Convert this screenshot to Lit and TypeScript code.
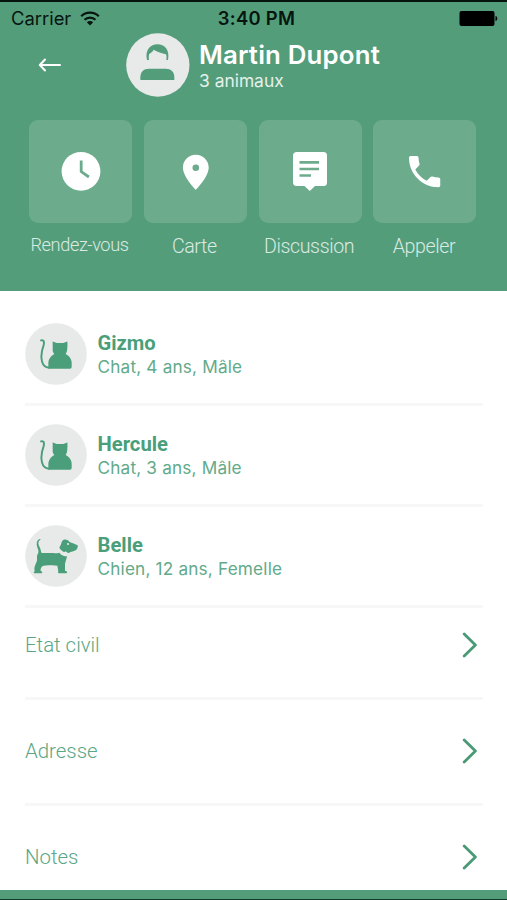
import { LitElement, html, css, svg } from "lit";
import { customElement } from "lit/decorators.js";

const catIcon = svg`
  <path d="M79 91C86 90 88 93 88 98C88 106 84 113 82 123C78 142 79 171 103 173" fill="none" stroke="#4a9f7a" stroke-width="5.8" stroke-linecap="round"/>
  <path d="M114 94C119 97 123 98 127 99H145C149 98 154 97 158 94C159 105 158 118 157 123C156 127 154 130 153 132C163 137 171 147 171 158V171Q171 176 166 176H104Q101 176 101 173V161C101 148 108 138 119 132C116 129 114 125 114 121Z" fill="#4a9f7a"/>`;

const dogIcon = svg`
  <path d="M75 388C66 392 65 401 67 409C68 417 73 421 71 429C69 433 67 436 67 442V452C66 460 59 468 59 477L60 485C57 487 56 491 59 491H80C84 491 84 487 80 485L78 484C77 478 79 473 84 469C95 466 107 467 128 468L131 485C129 488 130 491 133 491H154C158 491 159 487 155 485L151 483V462C153 455 156 447 157 440C148 440 140 437 134 429C124 432 116 430 108 430H83C78 430 80 424 77 417C73 407 69 402 72 396C73 392 80 390 77 388Z" fill="#4a9f7a"/>
  <path d="M146 391C152 388 160 391 164 396C171 401 183 402 189 407C190 413 187 422 180 423C174 426 168 425 164 429C160 432 157 428 153 425C150 428 146 427 142 423C138 421 135 417 134 413C137 410 138 406 140 401C141 396 143 392 146 391Z" fill="#4a9f7a"/>
  <circle cx="160" cy="403" r="3" fill="#e8eaea"/>`;

const clockIcon = svg`<circle cx="81" cy="171.3" r="19.4" fill="#fff"/>
  <path d="M81.2 160.6V171.6L88.9 177" fill="none" stroke="#6cac8d" stroke-width="2.8"/>`;
const pinIcon = svg`<path fill-rule="evenodd" fill="#fff" d="M80.8 154.7C73.5 154.7 67.9 160.4 67.9 167.6C67.9 177.2 80.8 189.9 80.8 189.9S93.7 177.2 93.7 167.6C93.7 160.4 88 154.7 80.8 154.7ZM80.8 164.4A3.3 3.3 0 1 1 80.8 171A3.3 3.3 0 1 1 80.8 164.4Z"/>`;
const chatIcon = svg`<path d="M67 152H93.5Q97 152 97 155.5V182.5Q97 186 93.5 186H85L79.8 191L74.5 186H67Q63 186 63 182.5V155.5Q63 152 67 152Z" fill="#fff"/>
  <path d="M69.5 162.4H89M69.5 169H89M69.5 175.5H81" stroke="#6cac8d" stroke-width="2.6"/>`;
const phoneIcon = svg`<g transform="translate(59.8 150.7) scale(1.735)"><path fill="#fff" d="M6.62 10.79c1.44 2.83 3.76 5.14 6.59 6.59l2.2-2.2c.27-.27.67-.36 1.02-.24 1.12.37 2.33.57 3.57.57.55 0 1 .45 1 1V20c0 .55-.45 1-1 1-9.39 0-17-7.61-17-17 0-.55.45-1 1-1h3.5c.55 0 1 .45 1 1 0 1.25.2 2.45.57 3.57.11.35.03.74-.25 1.02l-2.2 2.2z"/></g>`;

const actions = [
  { label: "Rendez-vous", icon: clockIcon, cls: "compact" },
  { label: "Carte", icon: pinIcon, cls: "" },
  { label: "Discussion", icon: chatIcon, cls: "" },
  { label: "Appeler", icon: phoneIcon, cls: "" },
];
const pets = [
  { name: "Gizmo", info: "Chat, 4 ans, Mâle", dog: false },
  { name: "Hercule", info: "Chat, 3 ans, Mâle", dog: false },
  { name: "Belle", info: "Chien, 12 ans, Femelle", dog: true },
];
const sections = ["Etat civil", "Adresse", "Notes"];

@customElement("app-root")
export class AppRoot extends LitElement {
  static styles = css`
    :host {
      display: flex;
      flex-direction: column;
      box-sizing: border-box;
      height: 900px;
      overflow: hidden;
      background: #fff;
      border-top: 2px solid #06140e;
      border-bottom: 1px solid #123a29;
      font-family: Inter, "Liberation Sans", sans-serif;
      white-space: nowrap;
    }
    svg { display: block; flex: none; }
    .header {
      flex: none;
      height: 289px;
      background: #539d7b;
      box-sizing: border-box;
    }
    .status {
      display: grid;
      grid-template-columns: 1fr auto 1fr;
      height: 31px;
      padding: 0 9px 0 11px;
      align-items: center;
      color: #07150f;
      font-size: 18.4px;
      line-height: 32px;
    }
    .carrier { display: flex; align-items: center; gap: 9px; letter-spacing: 0; }
    .time { font-weight: 600; letter-spacing: 0.3px; margin-left: 4px; }
    .battery { justify-self: end; }
    .profile { display: flex; height: 64px; padding-left: 38px; align-items: center; }
    .avatar { margin-left: 64px; }
    .who { margin-left: 9px; margin-top: 2px; color: #fff; }
    .client { font-size: 25.8px; font-weight: 600; line-height: 30px; letter-spacing: 0.18px; }
    .count { font-size: 17.4px; line-height: 22px; color: #e3f1ea; letter-spacing: 0; }
    .actions { display: grid; grid-template-columns: repeat(4, 103px); column-gap: 11.8px; padding: 23px 0 0 29px; }
    .action { display: flex; flex-direction: column; align-items: center; }
    .tile { width: 103px; height: 103px; border-radius: 9px; background: #6cac8d; }
    .label {
      margin-top: 12px;
      margin-right: 2px;
      font: 300 19.6px/24px Roboto, sans-serif;
      letter-spacing: -0.4px;
      color: #d9ebe2;
    }
    .compact { margin-top: 11px; font-size: 18.2px; line-height: 22px; }
    .content { flex: 1; min-height: 0; overflow: hidden; padding: 14px 24px 0 25px; }
    .pet {
      display: flex;
      align-items: center;
      height: 98px;
      border-bottom: 3px solid #f7f7f7;
    }
    .pet-text { margin-left: 10.5px; margin-top: 1px; }
    .pet-name { font: 700 20.2px/24px Roboto, sans-serif; color: #4a9f7a; }
    .pet-info { font-size: 17.2px; line-height: 23px; color: #62aa8a; letter-spacing: 0.18px; }
    .section {
      display: flex;
      align-items: center;
      justify-content: space-between;
      box-sizing: border-box;
      height: 106px;
      padding-right: 5px;
      padding-bottom: 1px;
      border-bottom: 3px solid #f7f7f7;
      font: 300 20.4px/24px Roboto, sans-serif;
      color: #5ba684;
    }
    .section.first { height: 92px; padding-top: 0; padding-bottom: 15px; }
    .footer { flex: none; height: 9px; background: #539d7b; }
  `;

  render() {
    return html`
      <div class="header">
        <div class="status">
          <div class="carrier">
            Carrier
            <svg width="20" height="15" viewBox="0 0 20 15" fill="none" stroke="#07150f" stroke-width="2.2">
              <path d="M1.2 5.3C6 .5 14 .5 18.8 5.3M4.5 8.8C7.6 5.8 12.4 5.8 15.5 8.8"/>
              <path d="M10 14.6L6.8 11.3C8.6 9.7 11.4 9.7 13.2 11.3Z" fill="#07150f" stroke="none"/>
            </svg>
          </div>
          <div class="time">3:40 PM</div>
          <svg class="battery" width="39" height="15" viewBox="0 0 39 15">
            <rect x="0.5" y="0" width="35" height="15" rx="2" fill="#000"/>
            <path d="M36.5 5C38.9 5.6 38.9 9.4 36.5 10Z" fill="#000"/>
          </svg>
        </div>
        <div class="profile">
          <svg width="24" height="14" viewBox="0 0 24 14" fill="none" stroke="#fff" stroke-width="2" stroke-linecap="round" stroke-linejoin="round">
            <path d="M22 7H2M7 1.5L1.8 7L7 12.5"/>
          </svg>
          <svg class="avatar" width="64" height="64" viewBox="378 99 192 192">
            <circle cx="473.5" cy="195" r="95" fill="#e8eaea"/>
            <path d="M441 180C434 150 452 133 472 133C494 133 510 150 504 180H499C500 172 500 168 498 163C486 160 471 155 461 149C458 155 452 159 448 161C446 167 446 173 447 180Z" fill="#539d7b"/>
            <path d="M421 240V232C421 216 431 206 447 206H497C513 206 523 216 523 232V240Z" fill="#539d7b"/>
          </svg>
          <div class="who">
            <div class="client">Martin Dupont</div>
            <div class="count">3 animaux</div>
          </div>
        </div>
        <div class="actions">
          ${actions.map((a) => html`
            <div class="action">
              <svg class="tile" viewBox="29 120 103 103">${a.icon}</svg>
              <div class="label ${a.cls}">${a.label}</div>
            </div>`)}
        </div>
      </div>
      <div class="content">
        ${pets.map((p) => html`
          <div class="pet">
            <svg width="62" height="62" viewBox=${p.dog ? "31 346 186 186" : "31 39 186 186"}>
              <circle cx="124" cy=${p.dog ? 439 : 132} r="92.5" fill="#e8eaea"/>
              ${p.dog ? dogIcon : catIcon}
            </svg>
            <div class="pet-text">
              <div class="pet-name">${p.name}</div>
              <div class="pet-info">${p.info}</div>
            </div>
          </div>`)}
        ${sections.map((s, i) => html`
          <div class="section ${i === 0 ? "first" : ""}">
            <span>${s}</span>
            <svg width="16" height="26" viewBox="0 0 16 26" fill="none" stroke="#4a9a77" stroke-width="2.8" stroke-linecap="round" stroke-linejoin="round">
              <path d="M2.2 1.9L13.4 13L2.2 24.1"/>
            </svg>
          </div>`)}
      </div>
      <div class="footer"></div>
    `;
  }
}
